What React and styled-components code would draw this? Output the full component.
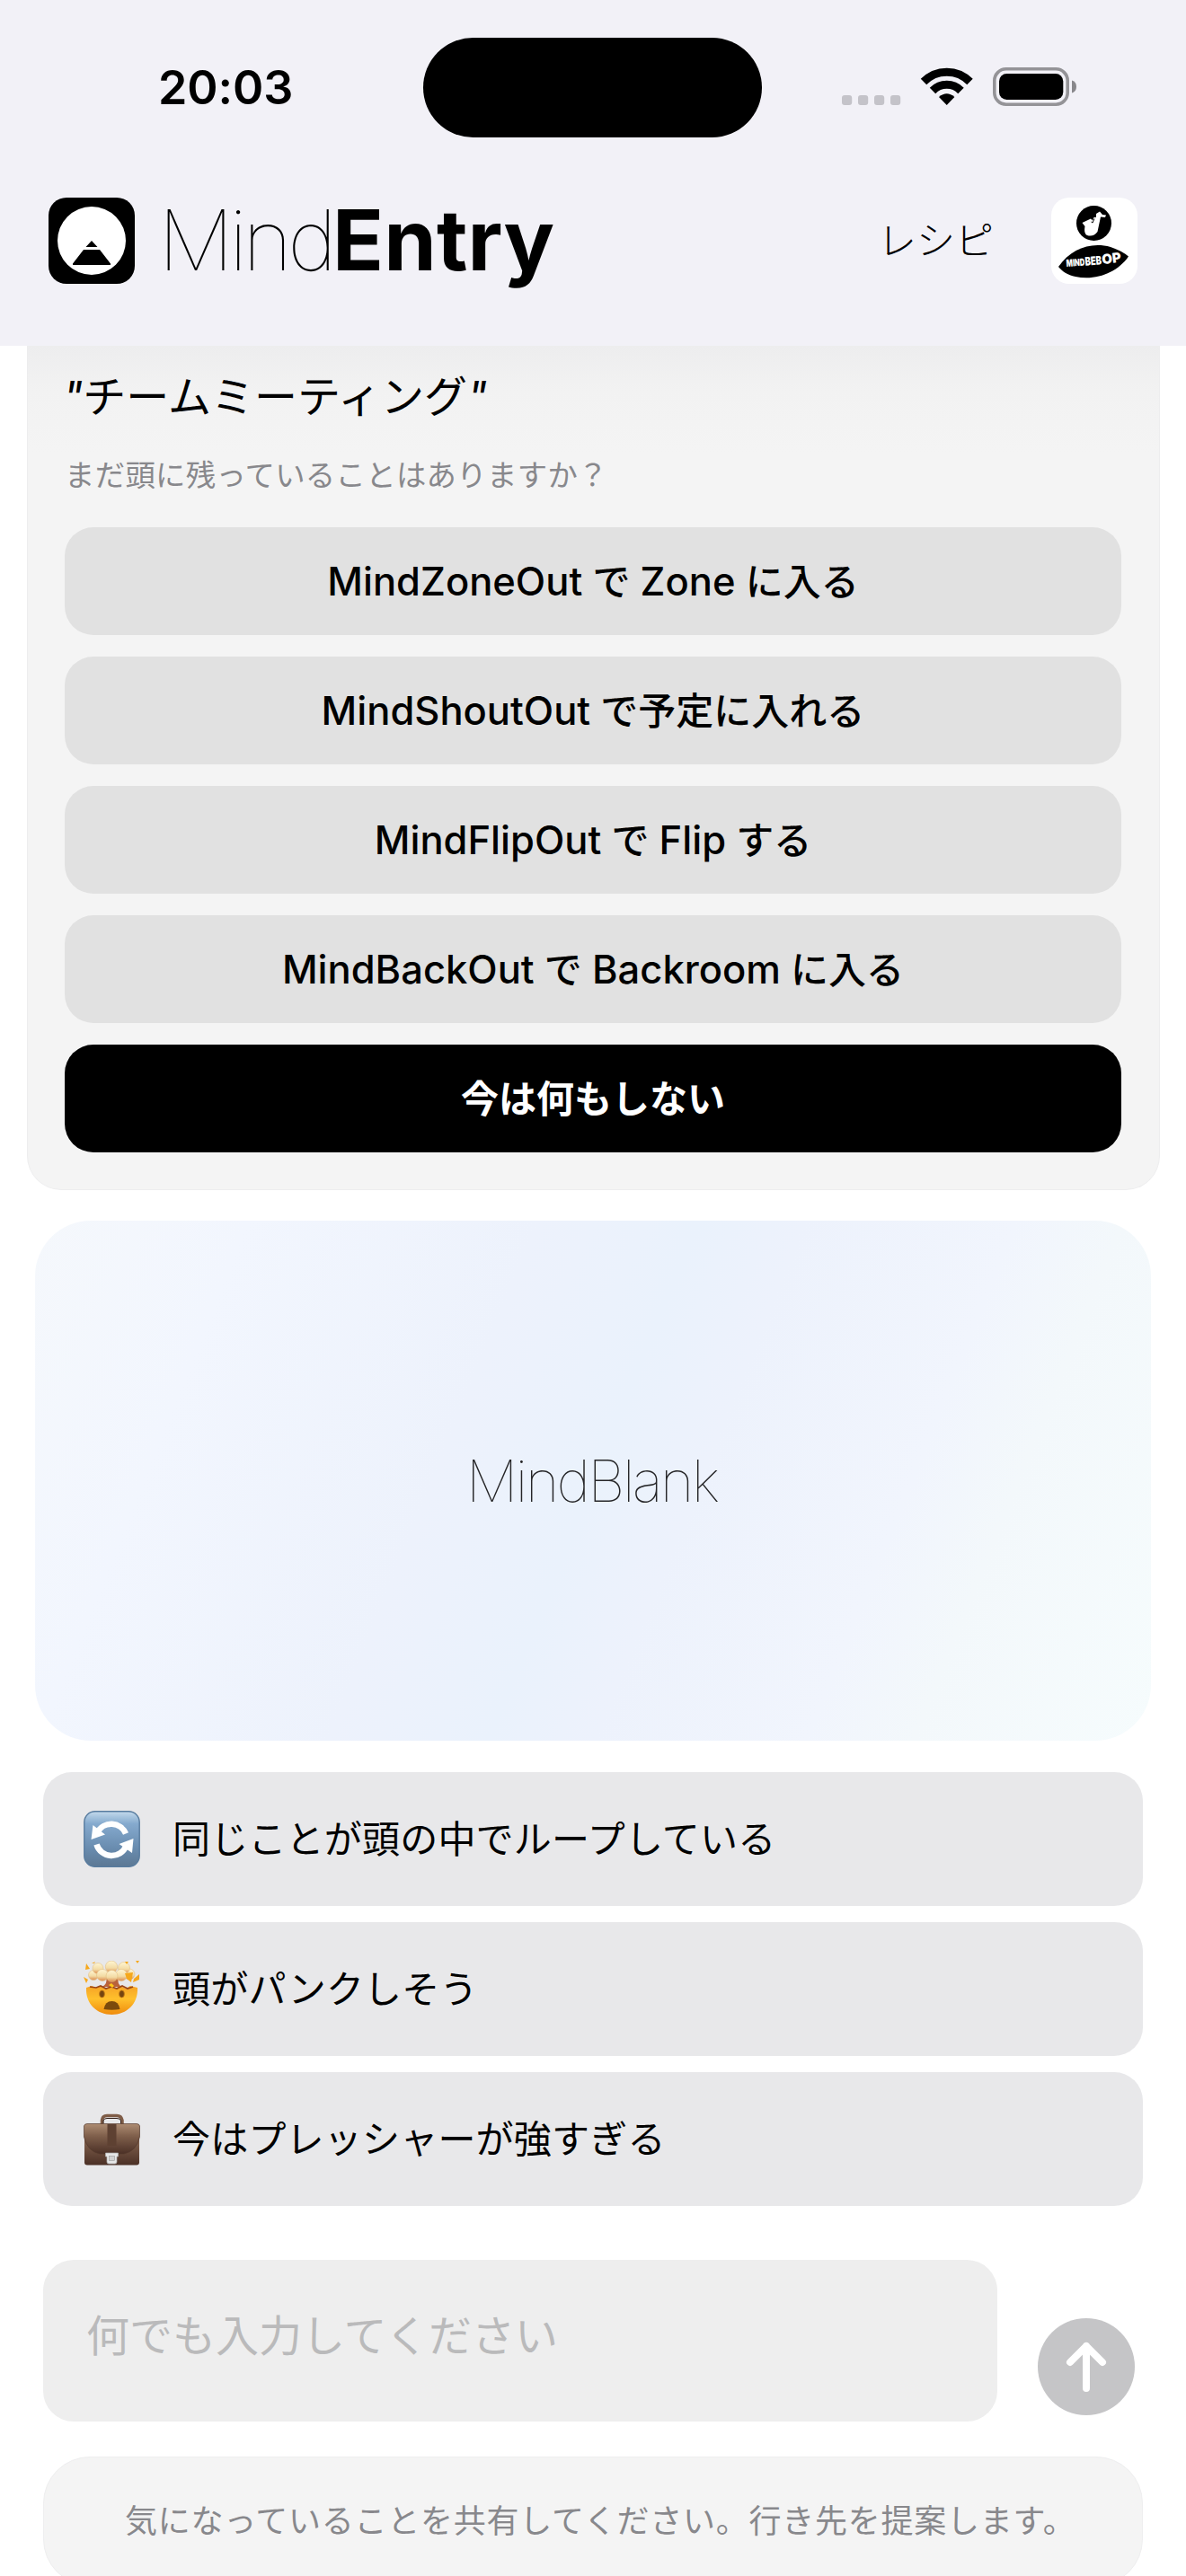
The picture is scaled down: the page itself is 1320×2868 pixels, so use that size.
import React from 'react'
import styled, { createGlobalStyle } from 'styled-components'

const GlobalStyle = createGlobalStyle`
  * { box-sizing: border-box; }
  html, body {
    margin: 0;
    background: #ffffff;
  }
  body {
    font-family: Inter, 'Noto Sans CJK JP', sans-serif;
    color: #000000;
  }
`;

const Screen = styled.div`
  width: 1320px;
  height: 2868px;
  overflow: hidden;
  background: #ffffff;
`;

const TopArea = styled.header`
  height: 385px;
  padding-top: 41px;
  background: #f2f1f7;
`;

const StatusBar = styled.div`
  display: flex;
  height: 112px;
  align-items: center;
`;

const Clock = styled.div`
  width: 471px;
  padding-top: 2px;
  padding-left: 176px;
  font-size: 52px;
  font-weight: 600;
  line-height: 1;
  letter-spacing: -0.1px;
`;

const Island = styled.div`
  width: 377px;
  height: 111px;
  border-radius: 56px;
  background: #000000;
`;

const StatusIcons = styled.div`
  margin-left: 88px;
  display: flex;
`;

const NavBar = styled.div`
  display: flex;
  align-items: center;
  height: 96px;
  margin-top: 67px;
  padding: 0 54px;
`;

const AppName = styled.h1`
  flex: 1;
  margin: 0;
  padding-left: 26px;
  padding-bottom: 2px;
  font-size: 94px;
  line-height: 94px;
  font-weight: 700;
  letter-spacing: 0.2px;
  white-space: nowrap;

  span { font-weight: 100; letter-spacing: -5px; }
`;

const Recipe = styled.a`
  margin-right: 64px;
  font-size: 43px;
  font-weight: 300;
  line-height: 96px;
`;

const Main = styled.main`
  display: flex;
  flex-direction: column;
`;

const Card = styled.section`
  margin: 0 29px 0 30px;
  height: 940px;
  padding: 22px 42px 0 41px;
  border: 1px solid #ededee;
  border-top: 0;
  border-radius: 0 0 38px 38px;
  background: linear-gradient(#ededee 0, #f2f2f2 50px, #f4f4f4 120px);
`;

const Topic = styled.h2`
  margin: 0 0 0 -2px;
  font-size: 48px;
  font-weight: 400;
  line-height: 70px;
`;

const Quote = styled.span`
  font-style: italic;
`;

const Question = styled.p`
  margin: 26px 0 32px;
  font-size: 33.4px;
  line-height: 52px;
  letter-spacing: 0.3px;
  color: #88888c;
`;

const Actions = styled.div`
  display: flex;
  flex-direction: column;
  gap: 24px;
`;

const ActionButton = styled.button`
  height: 120px;
  padding: 0 0 6px;
  border: 0;
  border-radius: 32px;
  background: ${p => (p.$primary ? '#000000' : '#e1e1e1')};
  color: ${p => (p.$primary ? '#ffffff' : '#000000')};
  font-family: inherit;
  font-size: 42px;
  font-weight: ${p => (p.$primary ? 600 : 500)};
`;

const Latin = styled.span`
  font-size: 43.5px;
`;

const Blank = styled.section`
  display: flex;
  align-items: center;
  justify-content: center;
  height: 579px;
  margin: 34px 39px 0;
  padding-right: 3px;
  border-radius: 62px;
  background: linear-gradient(112deg, #f5f8fc 0%, #f2f6fe 16%, #edf2fc 38%, #eaf2fc 50%, #edf2fc 58%, #f1f5fd 74%, #f3f8fb 82%, #f6fcfd 100%);
  color: #262628;
  font-size: 64.5px;
  font-weight: 100;
  letter-spacing: -2.8px;
`;

const Options = styled.div`
  display: flex;
  flex-direction: column;
  gap: 18px;
  margin: 35px 48px 0;
`;

const Option = styled.button`
  display: flex;
  align-items: center;
  gap: 36px;
  height: 149px;
  padding: 0 0 0 45px;
  border: 0;
  border-radius: 32px;
  background: #e8e8ea;
  color: #000000;
  font-family: inherit;
  font-size: 42px;
  letter-spacing: 0.2px;
`;

const OptionLabel = styled.span`
  padding-bottom: 7px;
`;

const Composer = styled.div`
  display: flex;
  align-items: flex-end;
  gap: 45px;
  margin: 60px 57px 0 48px;
`;

const Field = styled.div`
  width: 1062px;
  height: 180px;
  padding: 48px;
  border-radius: 34px;
  background: #eeeeee;
  color: #bababb;
  font-size: 48px;
  line-height: 74px;
`;

const Send = styled.button`
  display: flex;
  align-items: center;
  justify-content: center;
  width: 108px;
  height: 108px;
  margin-bottom: 7px;
  padding: 0;
  border: 0;
  border-radius: 50%;
  background: #c5c5c7;
`;

const Hint = styled.footer`
  height: 144px;
  margin: 39px 48px 0;
  padding-left: 90px;
  border: 1px solid #eeeeef;
  border-radius: 52px;
  background: #f4f4f4;
  color: #88888c;
  font-size: 36px;
  line-height: 142px;
  letter-spacing: 0.76px;
  white-space: nowrap;
`;

const StatusGlyphs = () => (
  <svg width="264" height="46" viewBox="936 74 264 46">
    <g fill="#c4c3c9">
      {[937, 955, 973, 991].map(x => <rect key={x} x={x} y="106" width="11.2" height="11" rx="3" />)}
    </g>
    <g fill="none" stroke="#000">
      <path d="M1028 91 A36 36 0 0 1 1079.500 91" strokeWidth="9" />
      <path d="M1038 101 A22 22 0 0 1 1069.500 101" strokeWidth="9" />
    </g>
    <path d="M1045 108 Q1053.700 100.500 1062.400 108 L1053.700 117 Z" />
    <rect x="1106.800" y="76.800" width="81.400" height="39.400" rx="13" fill="none" stroke="#949397" strokeWidth="3.600" />
    <rect x="1112" y="82" width="71.300" height="29" rx="8.500" />
    <path d="M1193 89.500 Q1198 91 1198 96.500 Q1198 102 1193 103.500 Z" fill="#88878b" />
  </svg>
)

const Logo = () => (
  <svg width="96" height="96" viewBox="0 0 96 96">
    <rect width="96" height="96" rx="20" />
    <circle cx="48" cy="48" r="38" fill="#fff" />
    <path d="M48 48 L54.500 55 H41.500 Z M39 58 H57 L69 73.500 V75 H27 V73.500 Z" />
  </svg>
)

const Avatar = () => (
  <svg width="96" height="96" viewBox="0 0 96 96">
    <rect width="96" height="96" rx="20" fill="#fff" />
    <circle cx="47.500" cy="28.500" r="19.500" />
    <path d="M50 18 L54 15.500 L57 19 L61 19.500 L60 22 L55 21.500 L51.500 38 Q47 44 40 42 Q36 40 37.500 32 L34.500 28 L44 23.500 L46 25.500 L47.500 22 L50 22 Z" fill="#fff" />
    <path d="M44.500 27 L46 28 L48 23.500" fill="none" stroke="#000" />
    <path d="M8 77 C22 57 44 49 66 55 C75 58 82 62 86 65.500 C74 83 50 93 27 88 C18 86 12 82 8 77 Z" />
    <g fill="#fff" fontFamily="Inter, sans-serif" fontWeight="900">
      <text x="17" y="77" fontSize="11" textLength="20.500" lengthAdjust="spacingAndGlyphs" transform="rotate(-4 17 77)">MIND</text>
      <text x="38" y="75.700" fontSize="13" textLength="18.500" lengthAdjust="spacingAndGlyphs" transform="rotate(-5 38 75.700)">BEB</text>
      <text x="57" y="74.200" fontSize="15" textLength="21.500" lengthAdjust="spacingAndGlyphs" transform="rotate(-7 57 74.200)">OP</text>
    </g>
  </svg>
)

const LoopIcon = () => (
  <svg width="63" height="63" viewBox="0 0 63 63">
    <defs>
      <linearGradient id="loop" x2="0" y2="1">
        <stop offset="0" stopColor="#c3d9ec" />
        <stop offset="0.220" stopColor="#85aace" />
        <stop offset="0.650" stopColor="#6a8db0" />
        <stop offset="1" stopColor="#5c7894" />
      </linearGradient>
    </defs>
    <rect x="0.800" y="0.800" width="61.400" height="61.400" rx="12" fill="url(#loop)" stroke="#587c9f" strokeWidth="1.400" />
    <g fill="none" stroke="#fff" strokeWidth="6.500">
      <path d="M47 25.500 A17.500 17.500 0 0 0 15.500 24" />
      <path d="M14.500 37.500 A17.500 17.500 0 0 0 47.500 39" />
    </g>
    <path d="M10.500 16 L8.500 32 L24 26.500 Z M55.500 31 L54 47 L39.500 37 Z" fill="#fff" />
  </svg>
)

const BurstIcon = () => (
  <svg width="63" height="63" viewBox="0 0 63 63">
    <defs>
      <linearGradient id="face" x2="0" y2="1">
        <stop offset="0" stopColor="#f5a326" />
        <stop offset="0.450" stopColor="#ffc02c" />
        <stop offset="1" stopColor="#ef8b0c" />
      </linearGradient>
      <linearGradient id="cloud" x2="0" y2="1">
        <stop offset="0" stopColor="#fff6d3" />
        <stop offset="0.600" stopColor="#f3dba4" />
        <stop offset="1" stopColor="#dc8a4d" />
      </linearGradient>
    </defs>
    <path d="M25 19 H39 Q37 25 42 29 H21 Q27 25 25 19 Z" fill="#b9623a" />
    <path d="M3 30 L9 28 L14 30 L18 28 L24 31 L30 29 L35 31 L41 28 L47 31 L52 28 L60 30 C61 48 48 60 31.500 60 C15 60 2 48 3 30 Z" fill="url(#face)" />
    <path d="M7 29 L14 30 L19 28 L25 31 L31 29 L37 31 L43 28 L49 31 L55 29" fill="none" stroke="#9a4518" strokeWidth="1.700" />
    <g fill="url(#cloud)" stroke="#dfb878" strokeWidth="0.500">
      <circle cx="11" cy="16" r="5.500" />
      <circle cx="51" cy="15" r="6" />
      <circle cx="16" cy="8.500" r="6" />
      <circle cx="45" cy="8" r="6.500" />
      <circle cx="31" cy="6.800" r="6.700" />
      <circle cx="21" cy="16" r="6.500" />
      <circle cx="42" cy="16" r="6.500" />
      <circle cx="31.500" cy="17" r="6.500" />
    </g>
    <path d="M3 3 L7 9 L2 10 Z M9 3 L13 1 L12 3 Z M46 14 L55 13 L53 24 L48 20 Z M56 20 L62 15 V21 L55 24 Z M0 18 L5 21 L3 25 Z M46 1 L50 1 L48 4 Z M58 0 H62 L60 3 Z" fill="#f6a81c" />
    <path d="M28 27 L31 25 L34 28 L32 30 Z" fill="#ffc719" />
    <g fill="#744510" stroke="#c47a13" strokeWidth="0.800">
      <ellipse cx="20.500" cy="37" rx="2.900" ry="3.900" />
      <ellipse cx="42.500" cy="37" rx="2.900" ry="3.900" />
    </g>
    <path d="M22.500 54 Q24 45 31.500 45 Q39 45 40.500 54 Q31.500 55.500 22.500 54 Z" fill="#7b4a0c" />
  </svg>
)

const BriefcaseIcon = () => (
  <svg width="63" height="63" viewBox="0 0 63 63">
    <defs>
      <linearGradient id="leather" x2="0" y2="1">
        <stop offset="0" stopColor="#ad8c72" />
        <stop offset="0.400" stopColor="#80604c" />
        <stop offset="1" stopColor="#4b3026" />
      </linearGradient>
    </defs>
    <path d="M20.500 15 V10.500 Q21 5.500 26 5.500 H37 Q42 5.500 43 10.500 V15" fill="none" stroke="#7f5d48" strokeWidth="3.500" />
    <path d="M22 14 V11 Q22.500 8.500 26 8.500 H37 Q41 8.500 41.500 11 V14" fill="none" stroke="#35231c" />
    <rect x="1" y="15" width="61" height="45.500" rx="3" fill="url(#leather)" />
    <path d="M0.500 17 Q1 14.500 4 14.500 H59 Q62 14.500 62.500 17 V29 Q59 45 45 48 H18 Q4 45 0.500 29 Z" fill="url(#leather)" stroke="#553a2d" strokeWidth="0.700" />
    <path d="M26.500 15 H36.500 V39 H26.500 Z" fill="#5e4132" />
    <path d="M24.500 47 H38.500 V51 H37 V57 Q37 59 35 59 H28 Q26 59 26 57 V51 H24.500 Z" fill="#e7e7e7" stroke="#aaa" strokeWidth="0.700" />
    <rect x="28.500" y="50.500" width="6" height="5" fill="#d2d2d2" stroke="#999" strokeWidth="0.600" />
  </svg>
)

const actions = [
  { label: 'MindZoneOut で Zone に入る' },
  { label: 'MindShoutOut で予定に入れる' },
  { label: 'MindFlipOut で Flip する' },
  { label: 'MindBackOut で Backroom に入る' },
  { label: '今は何もしない', primary: true },
];

const options = [
  { icon: <LoopIcon />, label: '同じことが頭の中でループしている' },
  { icon: <BurstIcon />, label: '頭がパンクしそう' },
  { icon: <BriefcaseIcon />, label: '今はプレッシャーが強すぎる' },
];

// latin words are set slightly larger than the kana
const mixed = (label) => label.split(/([A-Za-z]+)/).map((part, i) => (
  i % 2 ? <Latin key={i}>{part}</Latin> : part
));

export default function App() {
  return (
    <Screen lang="ja">
      <GlobalStyle />
      <TopArea>
        <StatusBar>
          <Clock>20:03</Clock>
          <Island />
          <StatusIcons><StatusGlyphs /></StatusIcons>
        </StatusBar>
        <NavBar>
          <Logo />
          <AppName><span>Mind</span>Entry</AppName>
          <Recipe>レシピ</Recipe>
          <Avatar />
        </NavBar>
      </TopArea>
      <Main>
        <Card>
          <Topic><Quote>"</Quote>チームミーティング<Quote>"</Quote></Topic>
          <Question>まだ頭に残っていることはありますか？</Question>
          <Actions>
            {actions.map(({ label, primary }) => (
              <ActionButton key={label} $primary={primary}>{mixed(label)}</ActionButton>
            ))}
          </Actions>
        </Card>
        <Blank>MindBlank</Blank>
        <Options>
          {options.map(({ icon, label }) => (
            <Option key={label}>{icon}<OptionLabel>{label}</OptionLabel></Option>
          ))}
        </Options>
        <Composer>
          <Field>何でも入力してください</Field>
          <Send>
            <svg width="50" height="60" viewBox="0 0 50 60" fill="none" stroke="#fff" strokeWidth="8" strokeLinecap="round" strokeLinejoin="round">
              <path d="M25 54 V7 M7 25 L25 7 L43 25" />
            </svg>
          </Send>
        </Composer>
        <Hint>気になっていることを共有してください。行き先を提案します。</Hint>
      </Main>
    </Screen>
  )
}
